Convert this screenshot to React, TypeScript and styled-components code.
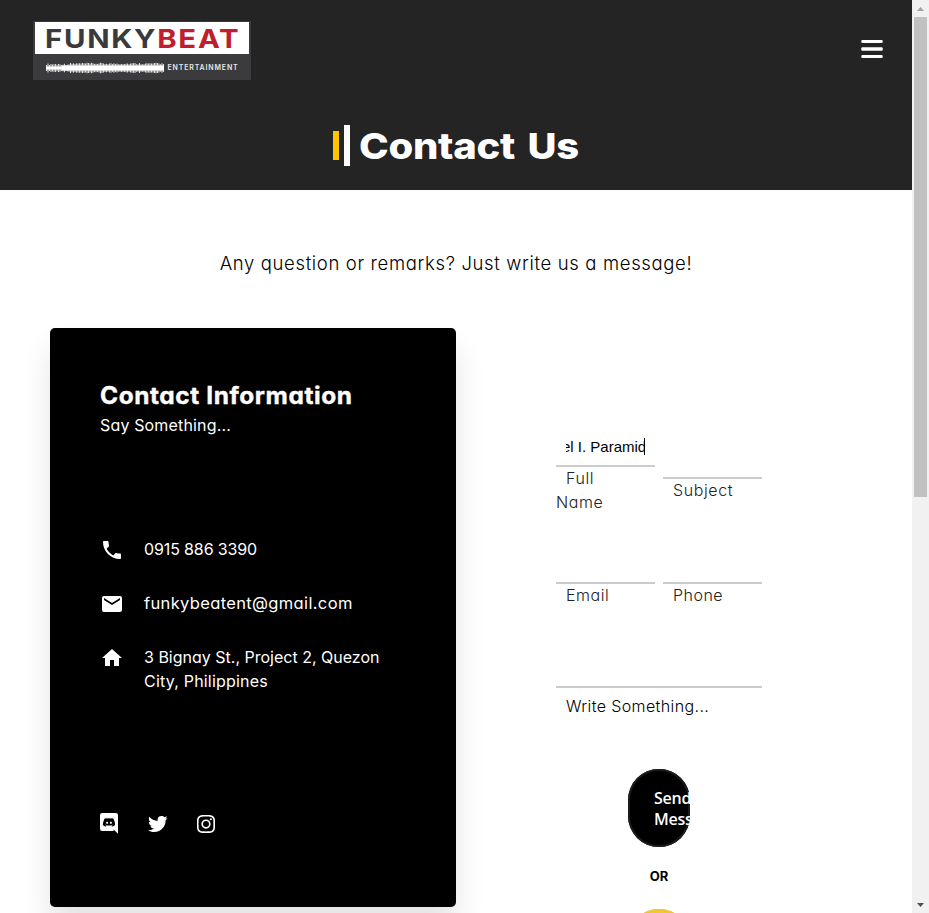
import React from "react";
import styled, { createGlobalStyle } from "styled-components";
import { MdEmail, MdHome, MdPhone } from "react-icons/md";
import { BiLogoInstagram, BiLogoTwitter } from "react-icons/bi";

const GlobalStyle = createGlobalStyle`
  * { box-sizing: border-box; }
  html, body { margin: 0; padding: 0; overflow: hidden; background: #fff; }
  body {
    font-family: Inter, "Open Sans", sans-serif;
    font-feature-settings: "cv11";
    font-size: 16px;
    line-height: 24px;
    color: #000;
  }
  h1, h2, p { margin: 0; }
`;

const Window = styled.div`
  display: grid;
  grid-template-columns: minmax(0, 1fr) 17px;
  height: 913px;
  overflow: hidden;
`;

const Page = styled.div`
  height: 913px;
  overflow: hidden;
`;

const Header = styled.header`
  height: 190px;
  background: #242424;
`;

const Nav = styled.nav`
  display: flex;
  justify-content: space-between;
  align-items: flex-start;
  height: 125px;
  padding: 21px 29.5px 0 33px;
`;

const Logo = styled.div`
  width: 218px;
  height: 59px;
  padding: 1px 2px;
  background: #3b3b3d;
`;

const LogoName = styled.div`
  height: 32px;
  padding-left: 9.6px;
  background: #fff;
  color: #3a3a3c;
  font-size: 26px;
  font-weight: 700;
  line-height: 33px;
`;

const LogoLetters = styled.span`
  display: inline-block;
  transform: scaleX(1.13);
  transform-origin: left center;
  letter-spacing: 1.5px;
  white-space: nowrap;
`;

const Red = styled.span`
  color: #be1e2d;
`;

const LogoTagline = styled.div`
  display: flex;
  align-items: center;
  gap: 3px;
  height: 27px;
  padding-left: 10.5px;
  color: #e8e8e8;
  font-size: 7px;
  font-weight: 600;
  letter-spacing: 0.85px;
`;

const MenuButton = styled.button`
  width: 22px;
  height: 18px;
  margin-top: 19px;
  padding: 0;
  border: 0;
  background: none;
  svg { display: block; }
`;

const TitleRow = styled.div`
  display: flex;
  align-items: center;
  height: 41px;
  padding-left: 333px;
`;

const TitleBar = styled.span<{ $color: string; $height: number; $gap: number }>`
  width: 6px;
  height: ${(p) => p.$height}px;
  margin-right: ${(p) => p.$gap}px;
  background: ${(p) => p.$color};
`;

const Title = styled.h1`
  color: #fff;
  font-feature-settings: normal;
  font-size: 36px;
  font-weight: 800;
  line-height: 42px;
  word-spacing: 3.8px;
  letter-spacing: -0.25px;
  transform: scaleX(1.11);
  transform-origin: left center;
  white-space: nowrap;
`;

const Intro = styled.p`
  margin-top: 60px;
  font-size: 18.5px;
  font-weight: 350;
  line-height: 27px;
  letter-spacing: 0.65px;
  text-align: center;
`;

const Columns = styled.main`
  display: flex;
  align-items: flex-start;
  margin-top: 51px;
  padding-left: 50px;
`;

const Card = styled.section`
  width: 406px;
  height: 579px;
  padding: 50px 50px 0;
  border-radius: 5px;
  background: #000;
  color: #fff;
  box-shadow: 0 20px 30px rgba(0, 0, 0, 0.11);
`;

const CardTitle = styled.h2`
  margin-bottom: -1px;
  font-size: 24px;
  font-weight: 700;
  line-height: 36px;
  letter-spacing: 0.58px;
  -webkit-text-stroke: 0.4px #fff;
  transform: scaleX(1.018);
  transform-origin: left center;
  white-space: nowrap;
`;

const Line = styled.p<{ $spacing: number; $size?: number }>`
  font-size: ${(p) => p.$size ?? 16}px;
  letter-spacing: ${(p) => p.$spacing}px;
  white-space: nowrap;
`;

const ContactList = styled.div`
  display: grid;
  gap: 30px;
  margin-top: 100px;
`;

const ContactRow = styled.div`
  display: flex;
  align-items: flex-start;
  gap: 20px;
  svg { flex: none; margin: 1px 0 -1px; }
`;

const Socials = styled.div`
  display: flex;
  gap: 24.5px;
  margin: 118.5px 0 0 -3px;
  svg { display: block; }
`;

const Form = styled.form`
  display: flex;
  flex-direction: column;
  width: 206px;
  margin: 100px 0 0 100px;
`;

const FieldRow = styled.div`
  display: grid;
  grid-template-columns: 1fr 1fr;
  gap: 8px;
  align-items: center;
  margin-bottom: 30px;
`;

const Field = styled.div`
  min-width: 0;
`;

const Entry = styled.div<{ $height?: number }>`
  height: ${(p) => p.$height ?? 39}px;
  padding: 6px 10px 0;
  border-bottom: 2px solid #ccc;
`;

const TypedText = styled.div`
  height: 23px;
  overflow: hidden;
  white-space: nowrap;
  font-family: "Liberation Sans", Arial, sans-serif;
  font-size: 15px;
  line-height: 26px;
  text-indent: -4px;
`;

const EntryLine = styled.div`
  display: flex;
  align-items: center;
  width: 79px;
`;

const Caret = styled.span`
  flex: none;
  width: 1px;
  height: 17px;
  margin-top: 2px;
  background: #000;
`;

const Label = styled.div<{ $spacing: number }>`
  width: 80px;
  margin: -1px 0 1px;
  color: #222;
  font-weight: 300;
  text-indent: 10px;
  letter-spacing: ${(p) => p.$spacing}px;
`;

const MessageLabel = styled.div`
  margin: 6px 0 51px;
  padding-left: 10px;
  font-weight: 350;
  letter-spacing: 0.38px;
`;

const PillButton = styled.button<{ $color: string; $edge: string }>`
  display: flex;
  align-items: flex-start;
  align-self: center;
  flex: none;
  width: 62px;
  height: 78px;
  padding: 19px 0 0 26px;
  border: 0;
  border-radius: 31px;
  background: ${(p) => p.$color};
  box-shadow: inset 0 0 0 2px ${(p) => p.$edge};
  color: #fff;
  font: 600 16px/21px "Open Sans", sans-serif;
  letter-spacing: -0.25px;
  text-align: left;
`;

const ButtonText = styled.span`
  width: 36px;
  overflow: hidden;
`;

const Or = styled.div`
  height: 20px;
  margin: 19px 0 23px;
  font-size: 13px;
  font-weight: 700;
  line-height: 20px;
  text-align: center;
`;

const ScrollTrack = styled.aside`
  display: flex;
  flex-direction: column;
  align-items: center;
  background: #f1f1f1;
`;

const ScrollThumb = styled.div`
  width: 13px;
  height: 480px;
  background: #c1c1c1;
`;

const ScrollArrow = styled.div<{ $down?: boolean }>`
  display: grid;
  place-items: center;
  width: 17px;
  height: 17px;
  margin-top: ${(p) => (p.$down ? "auto" : "0")};
`;

/** Mirrored amplitude outline of the logo's sound wave. */
function wavePath(): string {
  const heights = Array.from({ length: 79 }, (_, i) => {
    const noise = Math.abs(Math.sin(i * 12.9898) * 43758.5453) % 1;
    return (i < 16 ? 3 : 3.6) + noise * 1.6;
  });
  return heights.map((h, i) => `M${i * 1.5 + 0.5} ${6 - h}V${6 + h}`).join("");
}

const Wave = () => (
  <svg width="119" height="12" viewBox="0 0 119 12">
    <path d={wavePath()} stroke="#d8d8d8" strokeWidth="1.1" fill="none" />
    <path d="M0 6H24" stroke="#fff" strokeWidth="3" />
    <path d="M16 6H118" stroke="#fff" strokeWidth="5" />
  </svg>
);

const Discord = () => (
  <svg width="24" height="24" viewBox="0 0 24 24" fill="#fff">
    <path
      transform="translate(1.2 .15) scale(.9)"
      d="M22,24L16.75,19L17.38,21H4.5A2.5,2.5 0 0,1 2,18.5V3.5A2.5,2.5 0 0,1 4.5,1H19.5A2.5,2.5 0 0,1 22,3.5V24M12,6.8C9.32,6.8 7.44,7.95 7.44,7.95C8.47,7.03 10.27,6.5 10.27,6.5L10.1,6.33C8.41,6.36 6.88,7.53 6.88,7.53C5.16,11.12 5.27,14.22 5.27,14.22C6.67,16.03 8.75,15.9 8.75,15.9L9.46,15C8.21,14.73 7.42,13.62 7.42,13.62C7.42,13.62 9.3,14.9 12,14.9C14.7,14.9 16.58,13.62 16.58,13.62C16.58,13.62 15.79,14.73 14.54,15L15.25,15.9C15.25,15.9 17.33,16.03 18.73,14.22C18.73,14.22 18.84,11.12 17.12,7.53C17.12,7.53 15.59,6.36 13.9,6.33L13.73,6.5C13.73,6.5 15.53,7.03 16.56,7.95C16.56,7.95 14.68,6.8 12,6.8M9.93,10.59C10.58,10.59 11.11,11.16 11.1,11.86C11.1,12.55 10.58,13.13 9.93,13.13C9.29,13.13 8.77,12.55 8.77,11.86C8.77,11.16 9.28,10.59 9.93,10.59M14.1,10.59C14.75,10.59 15.27,11.16 15.27,11.86C15.27,12.55 14.75,13.13 14.1,13.13C13.46,13.13 12.94,12.55 12.94,11.86C12.94,11.16 13.45,10.59 14.1,10.59Z"
    />
  </svg>
);

export default function App() {
  return (
    <>
      <GlobalStyle />
      <Window>
        <Page>
          <Header>
            <Nav>
              <Logo>
                <LogoName>
                  <LogoLetters>
                    FUNKY<Red>BEAT</Red>
                  </LogoLetters>
                </LogoName>
                <LogoTagline>
                  <Wave />
                  ENTERTAINMENT
                </LogoTagline>
              </Logo>
              <MenuButton aria-label="Menu">
                <svg width="22" height="18" viewBox="0 0 22 18" fill="#fff">
                  <rect x="0.3" y="0" width="21.4" height="3.1" rx="1" />
                  <rect x="0.3" y="7.3" width="21.4" height="3.4" rx="1" />
                  <rect x="0.3" y="14.9" width="21.4" height="3.1" rx="1" />
                </svg>
              </MenuButton>
            </Nav>
            <TitleRow>
              <TitleBar $color="#ffc400" $height={29} $gap={5} />
              <TitleBar $color="#fff" $height={41} $gap={9} />
              <Title>Contact Us</Title>
            </TitleRow>
          </Header>
          <Intro>Any question or remarks? Just write us a message!</Intro>
          <Columns>
            <Card>
              <CardTitle>Contact Information</CardTitle>
              <Line $spacing={0.16}>Say Something...</Line>
              <ContactList>
                <ContactRow>
                  <MdPhone size={24} />
                  <Line $spacing={-0.13}>0915 886 3390</Line>
                </ContactRow>
                <ContactRow>
                  <MdEmail size={24} />
                  <Line $spacing={0.35} $size={16.5}>funkybeatent@gmail.com</Line>
                </ContactRow>
                <ContactRow>
                  <MdHome size={24} />
                  <div>
                    <Line $spacing={0}>3 Bignay St., Project 2, Quezon</Line>
                    <Line $spacing={0.2}>City, Philippines</Line>
                  </div>
                </ContactRow>
              </ContactList>
              <Socials>
                <Discord />
                <BiLogoTwitter size={24} />
                <BiLogoInstagram size={24} />
              </Socials>
            </Card>
            <Form>
              <FieldRow>
                <Field>
                  <Entry>
                    <EntryLine>
                      <TypedText>el I. Paramid</TypedText>
                      <Caret />
                    </EntryLine>
                  </Entry>
                  <Label $spacing={0.6}>Full Name</Label>
                </Field>
                <Field>
                  <Entry />
                  <Label $spacing={0.6}>Subject</Label>
                </Field>
              </FieldRow>
              <FieldRow>
                <Field>
                  <Entry />
                  <Label $spacing={0.55}>Email</Label>
                </Field>
                <Field>
                  <Entry />
                  <Label $spacing={0.5}>Phone</Label>
                </Field>
              </FieldRow>
              <Entry $height={50} />
              <MessageLabel>Write Something...</MessageLabel>
              <PillButton type="button" $color="#000" $edge="#1b1b1b">
                <ButtonText>Send Message</ButtonText>
              </PillButton>
              <Or>OR</Or>
              <PillButton type="button" $color="#f1c933" $edge="#edc531" aria-label="Call" />
            </Form>
          </Columns>
        </Page>
        <ScrollTrack>
          <ScrollArrow>
            <svg width="7" height="4" viewBox="0 0 7 4" fill="#a3a3a3">
              <path d="M0 4L3.5 0L7 4Z" />
            </svg>
          </ScrollArrow>
          <ScrollThumb />
          <ScrollArrow $down>
            <svg width="7" height="4" viewBox="0 0 7 4" fill="#505050">
              <path d="M0 0L3.5 4L7 0Z" />
            </svg>
          </ScrollArrow>
        </ScrollTrack>
      </Window>
    </>
  );
}
